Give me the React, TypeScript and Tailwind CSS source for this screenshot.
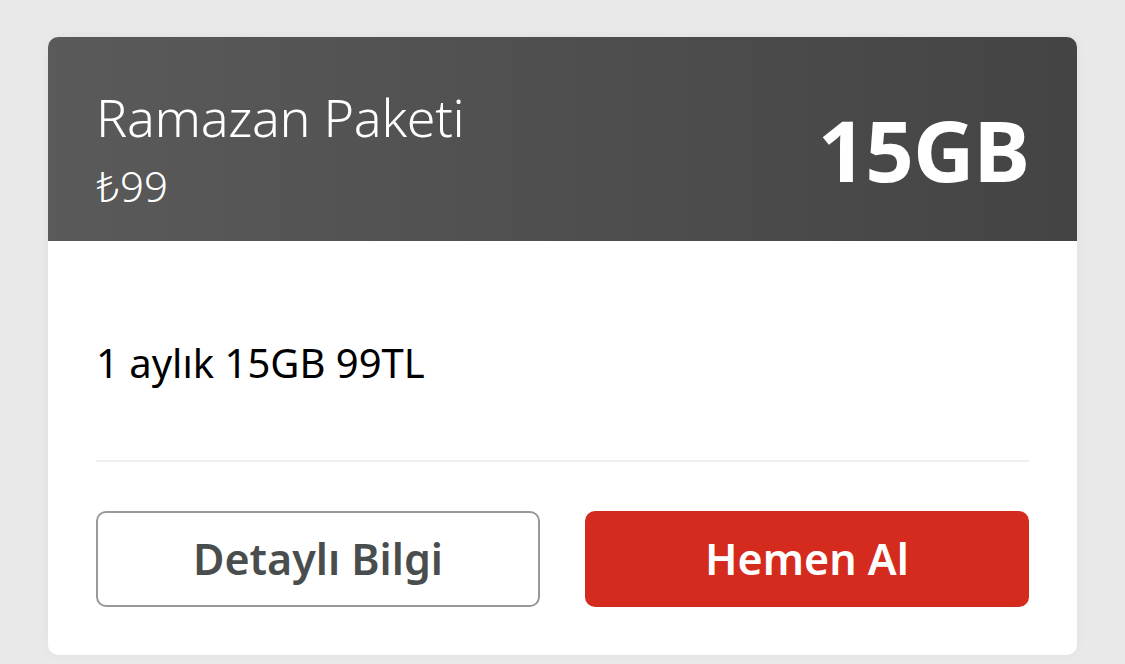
export default function App() {
  const font = { fontFamily: '"Noto Sans", "Open Sans", sans-serif' };
  return (
    <div className="flex min-h-[664px] w-full bg-[#e9e9e9] px-12 pt-[37px] pb-[9px]" style={font}>
      <div className="flex w-[1029px] flex-col overflow-hidden rounded-[10px] bg-white shadow-[0_0_12px_rgba(0,0,0,0.04)]">
        <div className="flex h-[204px] items-start justify-between bg-gradient-to-r from-[#5a5a5a] to-[#444444] px-12">
          <div className="flex flex-col pt-[54px] text-white">
            <div className="text-[52px] font-light leading-none tracking-[-0.3px]">Ramazan Paketi</div>
            <div className="mt-[22px] text-[42px] font-light leading-none">₺99</div>
          </div>
          <div className="pt-[70px] text-[85px] font-bold leading-none tracking-[-1px] text-white">15GB</div>
        </div>
        <div className="flex flex-1 flex-col px-12">
          <div className="pt-[102px] text-[40px] leading-none text-black">1 aylık 15GB 99TL</div>
          <div className="mt-[77px] h-[2px] bg-[#eeeeee]" />
          <div className="mt-[49px] grid grid-cols-2 gap-[45px]">
            <button className="h-[96px] rounded-[10px] border-2 border-[#999999] bg-white text-[43px] font-semibold text-[#4a4d4e]">
              Detaylı Bilgi
            </button>
            <button className="h-[96px] rounded-[10px] bg-[#d52b1e] text-[43px] font-semibold text-white">
              Hemen Al
            </button>
          </div>
        </div>
      </div>
    </div>
  );
}
